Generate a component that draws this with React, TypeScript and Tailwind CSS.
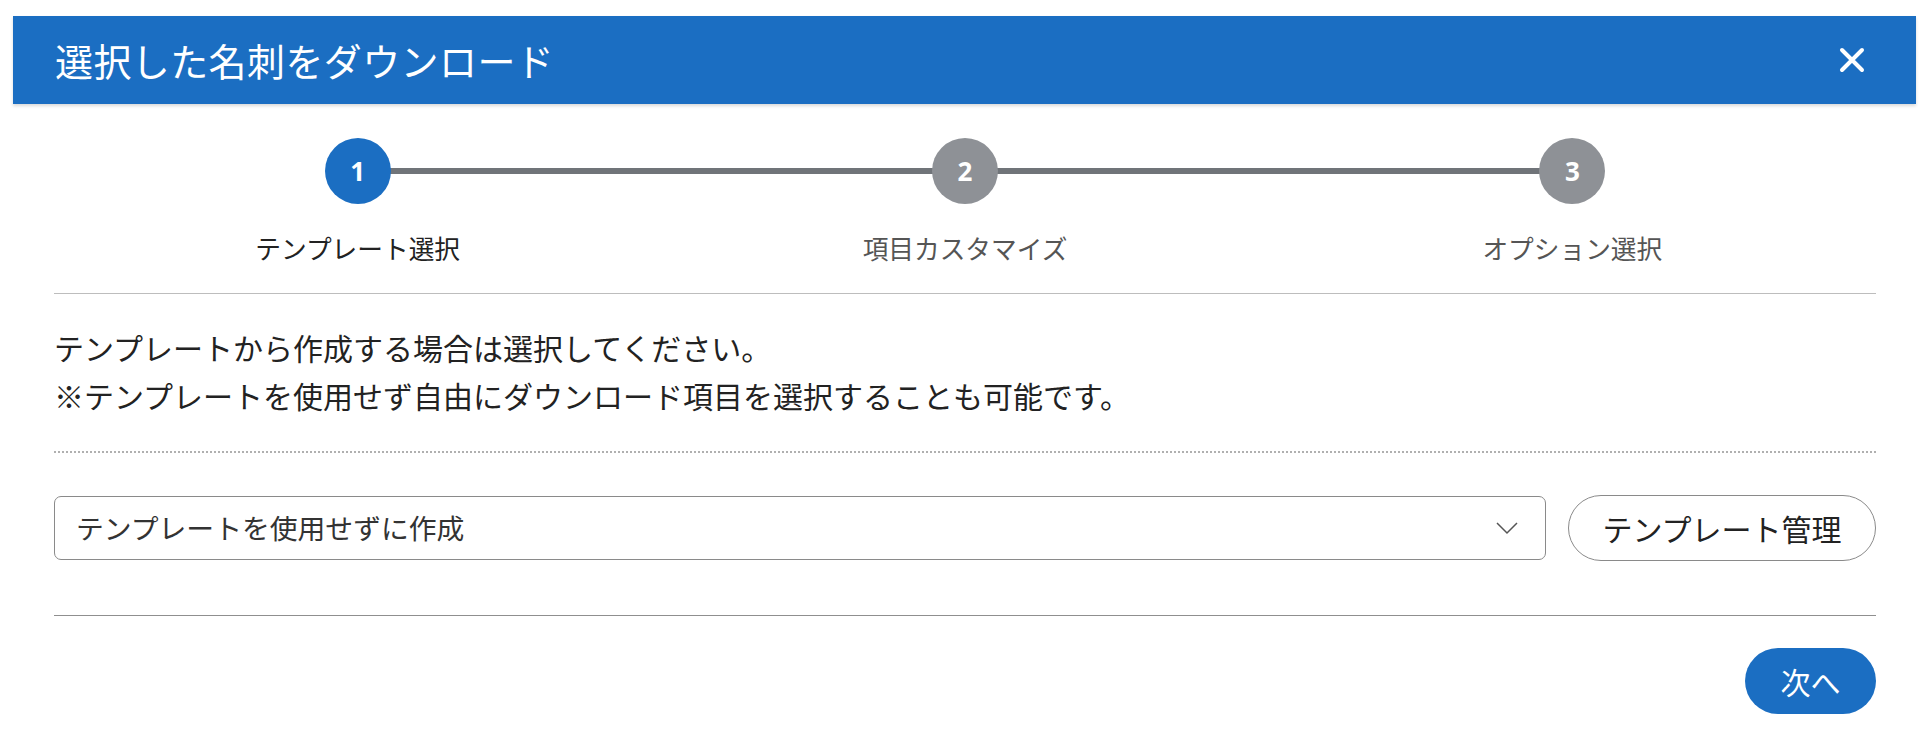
import React from "react";

const jp = { fontFamily: '"Noto Sans CJK JP", "Noto Sans", sans-serif' };

function Step({ n, label, active }: { n: number; label: string; active?: boolean }) {
  return (
    <div className="flex flex-col items-center">
      <div
        className={`relative z-10 w-[66px] h-[66px] rounded-full flex items-center justify-center text-white text-[26px] font-bold ${
          active ? "bg-[#1b6ec2]" : "bg-[#8e9196]"
        }`}
        style={{ fontFamily: '"Open Sans", "Liberation Sans", sans-serif' }}
      >
        {n}
      </div>
      <div
        className={`mt-[26px] text-[25.7px] leading-[36px] ${active ? "text-[#222]" : "text-[#555]"}`}
        style={jp}
      >
        {label}
      </div>
    </div>
  );
}

export default function App() {
  return (
    <div className="w-full h-[756px] bg-white pt-4 pl-[13px] pr-3" style={jp}>
      <div className="h-[88px] bg-[#1b6ec2] flex items-center justify-between pl-[42px] pr-[50px] shadow-[0_2px_3px_rgba(0,0,0,0.15)]">
        <div className="text-white text-[38px] leading-none tracking-[0.4px]" style={jp}>
          選択した名刺をダウンロード
        </div>
        <svg width="28" height="28" viewBox="0 0 28 28">
          <path d="M4 4 L24 24 M24 4 L4 24" stroke="white" strokeWidth="4" strokeLinecap="round" />
        </svg>
      </div>

      <div className="pl-[41px] pr-[40px]">
        <div className="relative grid grid-cols-3 pt-[34px]">
          <div className="absolute left-[16.667%] right-[16.667%] top-[64px] h-[6px] bg-[#707479]" />
          <Step n={1} label="テンプレート選択" active />
          <Step n={2} label="項目カスタマイズ" />
          <Step n={3} label="オプション選択" />
        </div>

        <div className="mt-[27px] border-t border-[#bdbdbd]" />

        <div className="mt-[29px] text-[30px] leading-[48px] text-[#222]" style={jp}>
          <p>テンプレートから作成する場合は選択してください。</p>
          <p>※テンプレートを使用せず自由にダウンロード項目を選択することも可能です。</p>
        </div>

        <div className="mt-[32px] border-t-2 border-dotted border-[#b0b0b0]" />

        <div className="mt-[42px] flex items-center gap-[22px]">
          <div className="flex-1 h-[64px] border border-[#8a8a8a] rounded-[7px] flex items-center justify-between pl-[21px] pr-[27px]">
            <span className="text-[27.8px] text-[#333]" style={jp}>
              テンプレートを使用せずに作成
            </span>
            <svg width="22" height="13" viewBox="0 0 22 13">
              <path d="M1 1 L11 11 L21 1" fill="none" stroke="#555" strokeWidth="1.5" />
            </svg>
          </div>
          <button className="w-[308px] h-[66px] rounded-full border border-[#8a8a8a] flex items-center justify-center text-[30px] text-[#222] bg-white" style={jp}>
            テンプレート管理
          </button>
        </div>

        <div className="mt-[54px] border-t border-[#8f8f8f]" />

        <div className="mt-[32px] flex justify-end">
          <button className="w-[131px] h-[66px] rounded-full bg-[#1b6ec2] text-white text-[30px] flex items-center justify-center" style={jp}>
            次へ
          </button>
        </div>
      </div>
    </div>
  );
}
